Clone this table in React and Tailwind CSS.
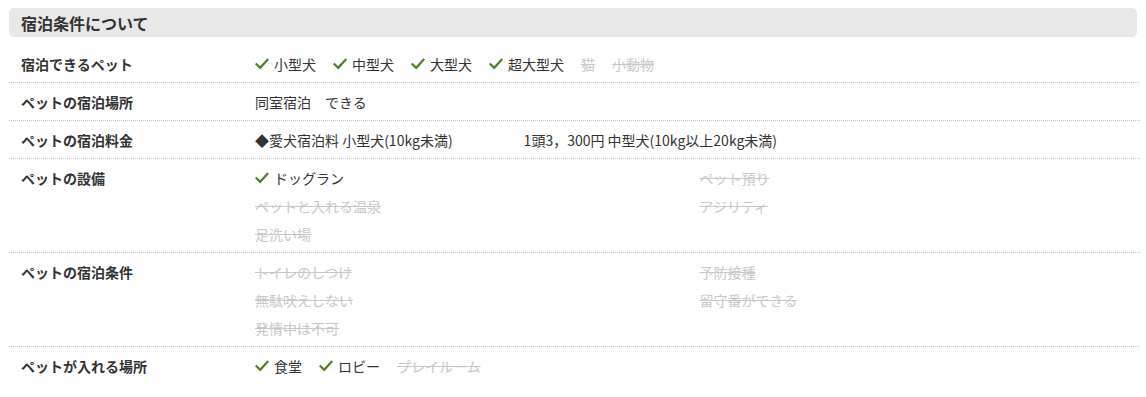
import React from 'react'

const Check = () => (
  <svg className="w-[14px] h-[14px] mr-[5px] shrink-0" viewBox="0 0 14 14" fill="none">
    <path d="M1.5 7.2 L5.2 10.8 L12.5 2.8" stroke="#4f7f2a" strokeWidth="2.2" strokeLinecap="square" />
  </svg>
)

const Item = ({ on, children, className = '' }) =>
  on ? (
    <span className={`inline-flex items-center text-[#333] ${className}`}>
      <Check />
      {children}
    </span>
  ) : (
    <span className={`inline-flex items-center text-[#c8c8c8] line-through ${className}`}>{children}</span>
  )

const Row = ({ label, children, last }) => (
  <div
    className={`flex pt-[5px] pb-[4px] ml-[9px] mr-[6px] ${
      last ? '' : 'border-b border-dotted border-[#c4c4c4]'
    }`}
  >
    <div className="w-[246px] pl-[12px] font-bold text-[#333] leading-[28px]">{label}</div>
    <div className="flex-1 leading-[28px]">{children}</div>
  </div>
)

export default function App() {
  return (
    <div
      className="w-[1146px] h-[397px] bg-white text-[14px] text-[#333] pt-[8px]"
      style={{ fontFamily: '"Noto Sans CJK JP", "Noto Sans", sans-serif' }}
    >
      <div className="mx-[9px] w-[1128px] h-[29px] bg-[#e8e8e8] rounded-[5px] pl-[12px] flex items-center text-[16px] font-bold text-[#333]">
        宿泊条件について
      </div>
      <div className="mt-[8px]">
        <Row label="宿泊できるペット">
          <div className="flex gap-[17px]">
            <Item on>小型犬</Item>
            <Item on>中型犬</Item>
            <Item on>大型犬</Item>
            <Item on>超大型犬</Item>
            <Item>猫</Item>
            <Item>小動物</Item>
          </div>
        </Row>
        <Row label="ペットの宿泊場所">
          <span>同室宿泊　できる</span>
        </Row>
        <Row label="ペットの宿泊料金">
          <span>◆愛犬宿泊料 小型犬(10kg未満)</span>
          <span className="ml-[71px]">1頭3，300円 中型犬(10kg以上20kg未満)</span>
        </Row>
        <Row label="ペットの設備">
          <div className="grid grid-cols-2">
            <div className="flex flex-col">
              <Item on>ドッグラン</Item>
              <Item>ペットと入れる温泉</Item>
              <Item>足洗い場</Item>
            </div>
            <div className="flex flex-col pl-[2px]">
              <Item>ペット預り</Item>
              <Item>アジリティ</Item>
            </div>
          </div>
        </Row>
        <Row label="ペットの宿泊条件">
          <div className="grid grid-cols-2">
            <div className="flex flex-col">
              <Item>トイレのしつけ</Item>
              <Item>無駄吠えしない</Item>
              <Item>発情中は不可</Item>
            </div>
            <div className="flex flex-col pl-[2px]">
              <Item>予防接種</Item>
              <Item>留守番ができる</Item>
            </div>
          </div>
        </Row>
        <Row label="ペットが入れる場所" last>
          <div className="flex gap-[17px]">
            <Item on>食堂</Item>
            <Item on>ロビー</Item>
            <Item>プレイルーム</Item>
          </div>
        </Row>
      </div>
    </div>
  )
}
